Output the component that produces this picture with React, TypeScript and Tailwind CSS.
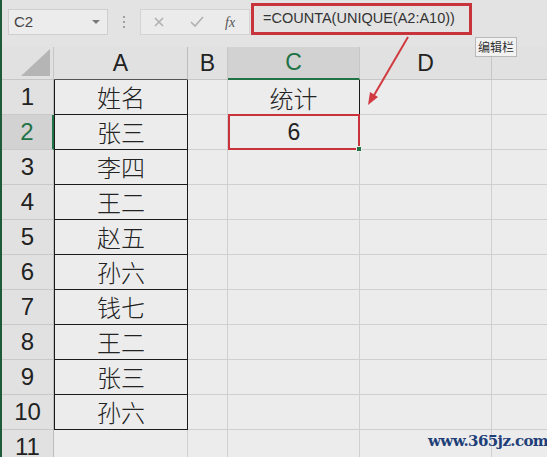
import React from "react";

const rows: { a: string; c: string }[] = [
  { a: "姓名", c: "统计" },
  { a: "张三", c: "6" },
  { a: "李四", c: "" },
  { a: "王二", c: "" },
  { a: "赵五", c: "" },
  { a: "孙六", c: "" },
  { a: "钱七", c: "" },
  { a: "王二", c: "" },
  { a: "张三", c: "" },
  { a: "孙六", c: "" },
  { a: "", c: "" },
];

const cjk = "font-['Noto_Sans_CJK_SC','Noto_Sans',sans-serif] font-light";
const latin = "font-['Liberation_Sans','Noto_Sans',sans-serif]";

export default function App() {
  return (
    <div className="relative w-[547px] h-[457px] overflow-hidden bg-[#ececec] border-l-2 border-[#1e5b3b]">
      {/* formula bar */}
      <div className="h-[47px] bg-[#e3e3e3] flex items-end pb-[12px]">
        <div className="ml-[6px] w-[100px] h-[26px] bg-[#ececec] border border-[#cfcfcf] flex items-center justify-between pl-[5px] pr-[7px]">
          <span className={`${latin} text-[15px] text-[#444]`}>C2</span>
          <span className="w-0 h-0 border-l-[4px] border-r-[4px] border-t-[4px] border-l-transparent border-r-transparent border-t-[#7a7a7a]" />
        </div>
        <div className="w-[32px] h-[26px] flex flex-col items-center justify-center gap-[3px]">
          <span className="w-[2px] h-[2px] bg-[#a0a0a0]" />
          <span className="w-[2px] h-[2px] bg-[#a0a0a0]" />
          <span className="w-[2px] h-[2px] bg-[#a0a0a0]" />
        </div>
        <div className="w-[110px] h-[26px] bg-[#ebebeb] border border-[#d4d4d4] flex items-center">
          <svg width="12" height="12" viewBox="0 0 12 12" className="ml-[12px]">
            <path d="M2 2 L10 10 M10 2 L2 10" stroke="#b0b0b0" strokeWidth="1.6" />
          </svg>
          <svg width="14" height="12" viewBox="0 0 14 12" className="ml-[25px]">
            <path d="M1 6 L5 10 L13 1" stroke="#b0b0b0" strokeWidth="1.6" fill="none" />
          </svg>
          <span className="ml-[21px] font-['Liberation_Serif',serif] italic text-[14px] text-[#555]">fx</span>
        </div>
        <div className="ml-[1px] w-[221px] h-[32px] border-[3px] border-[#c8343c] flex items-center pl-[9px]">
          <span className={`${latin} text-[14.5px] text-[#333]`}>=COUNTA(UNIQUE(A2:A10))</span>
        </div>
      </div>

      {/* sheet */}
      <div className="grid grid-cols-[52px_134px_40px_132px_132px_1fr]">
        {/* header row */}
        <div className="h-[33px] bg-[#e1e1e1] border-r border-b border-[#c6c6c6] relative">
          <svg width="30" height="27" viewBox="0 0 30 27" className="absolute right-[2px] bottom-[3px]">
            <polygon points="0,27 29,27 29,0" fill="#b5b5b5" />
          </svg>
        </div>
        <div className={`h-[33px] bg-[#e1e1e1] border-r border-b border-[#bcbcbc] border-b-[#555] flex items-center justify-center ${latin} text-[23px] text-[#222]`}>A</div>
        <div className={`h-[33px] bg-[#e1e1e1] border-r border-b border-[#c6c6c6] flex items-center justify-center ${latin} text-[23px] text-[#222]`}>B</div>
        <div className={`h-[33px] bg-[#d2d2d2] border-r border-[#c6c6c6] border-b-2 border-b-[#217346] flex items-center justify-center ${latin} text-[23px] text-[#217346]`}>C</div>
        <div className={`h-[33px] bg-[#e1e1e1] border-r border-b border-[#c6c6c6] flex items-center justify-center ${latin} text-[23px] text-[#222]`}>D</div>
        <div className="h-[33px] bg-[#e1e1e1] border-b border-[#c6c6c6]" />

        {rows.map((r, i) => {
          const n = i + 1;
          const inTable = n <= 10;
          const sel = n === 2;
          return (
            <React.Fragment key={n}>
              <div
                className={`h-[35px] flex items-center justify-center ${latin} text-[24px] border-b border-[#c9c9c9] ${
                  sel ? "bg-[#d2d2d2] text-[#217346] border-r-2 border-r-[#217346]" : "bg-[#e1e1e1] text-[#222] border-r border-r-[#bcbcbc]"
                }`}
              >
                {n}
              </div>
              <div
                className={`h-[35px] flex items-center justify-center ${cjk} text-[24px] text-[#222] ${
                  inTable ? "border-l border-r border-b border-[#1a1a1a]" : "border-r border-b border-[#d0d0d0]"
                }`}
              >
                {r.a}
              </div>
              <div className="h-[35px] border-r border-b border-[#d0d0d0]" />
              {sel ? (
                <div className={`relative h-[36px] -mt-[1px] border-2 border-[#c9323a] flex items-center justify-center ${latin} text-[23px] text-[#222]`}>
                  {r.c}
                  <span className="absolute -right-[4px] -bottom-[4px] w-[6px] h-[6px] bg-[#217346] border border-[#ececec]" />
                </div>
              ) : (
                <div
                  className={`h-[35px] flex items-center justify-center ${cjk} text-[24px] text-[#222] border-b border-[#d0d0d0] border-r ${
                    n === 1 ? "border-r-[#1a1a1a] border-b-0" : "border-r-[#d0d0d0]"
                  }`}
                >
                  {r.c}
                </div>
              )}
              <div className="h-[35px] border-r border-b border-[#d0d0d0]" />
              <div className="h-[35px] border-b border-[#d0d0d0]" />
            </React.Fragment>
          );
        })}
      </div>

      {/* tooltip */}
      <div className={`absolute left-[473px] top-[37px] px-[2px] h-[20px] bg-[#f2f2f2] border border-[#b9b9b9] flex items-center font-['Noto_Sans_CJK_SC',sans-serif] text-[12px] text-[#333]`}>
        编辑栏
      </div>

      {/* arrow */}
      <svg className="absolute left-0 top-0 pointer-events-none" width="547" height="457" viewBox="0 0 547 457">
        <line x1="406" y1="37" x2="371" y2="97" stroke="#d23a41" strokeWidth="2" />
        <polygon points="366,105 368,92 376,97" fill="#d23a41" />
      </svg>

      {/* watermark */}
      <div className="absolute left-[426px] top-[430px] font-['DejaVu_Serif',serif] font-bold text-[15px] text-[#1f3f78] tracking-[-0.6px]">
        www.365jz.com
      </div>
    </div>
  );
}
